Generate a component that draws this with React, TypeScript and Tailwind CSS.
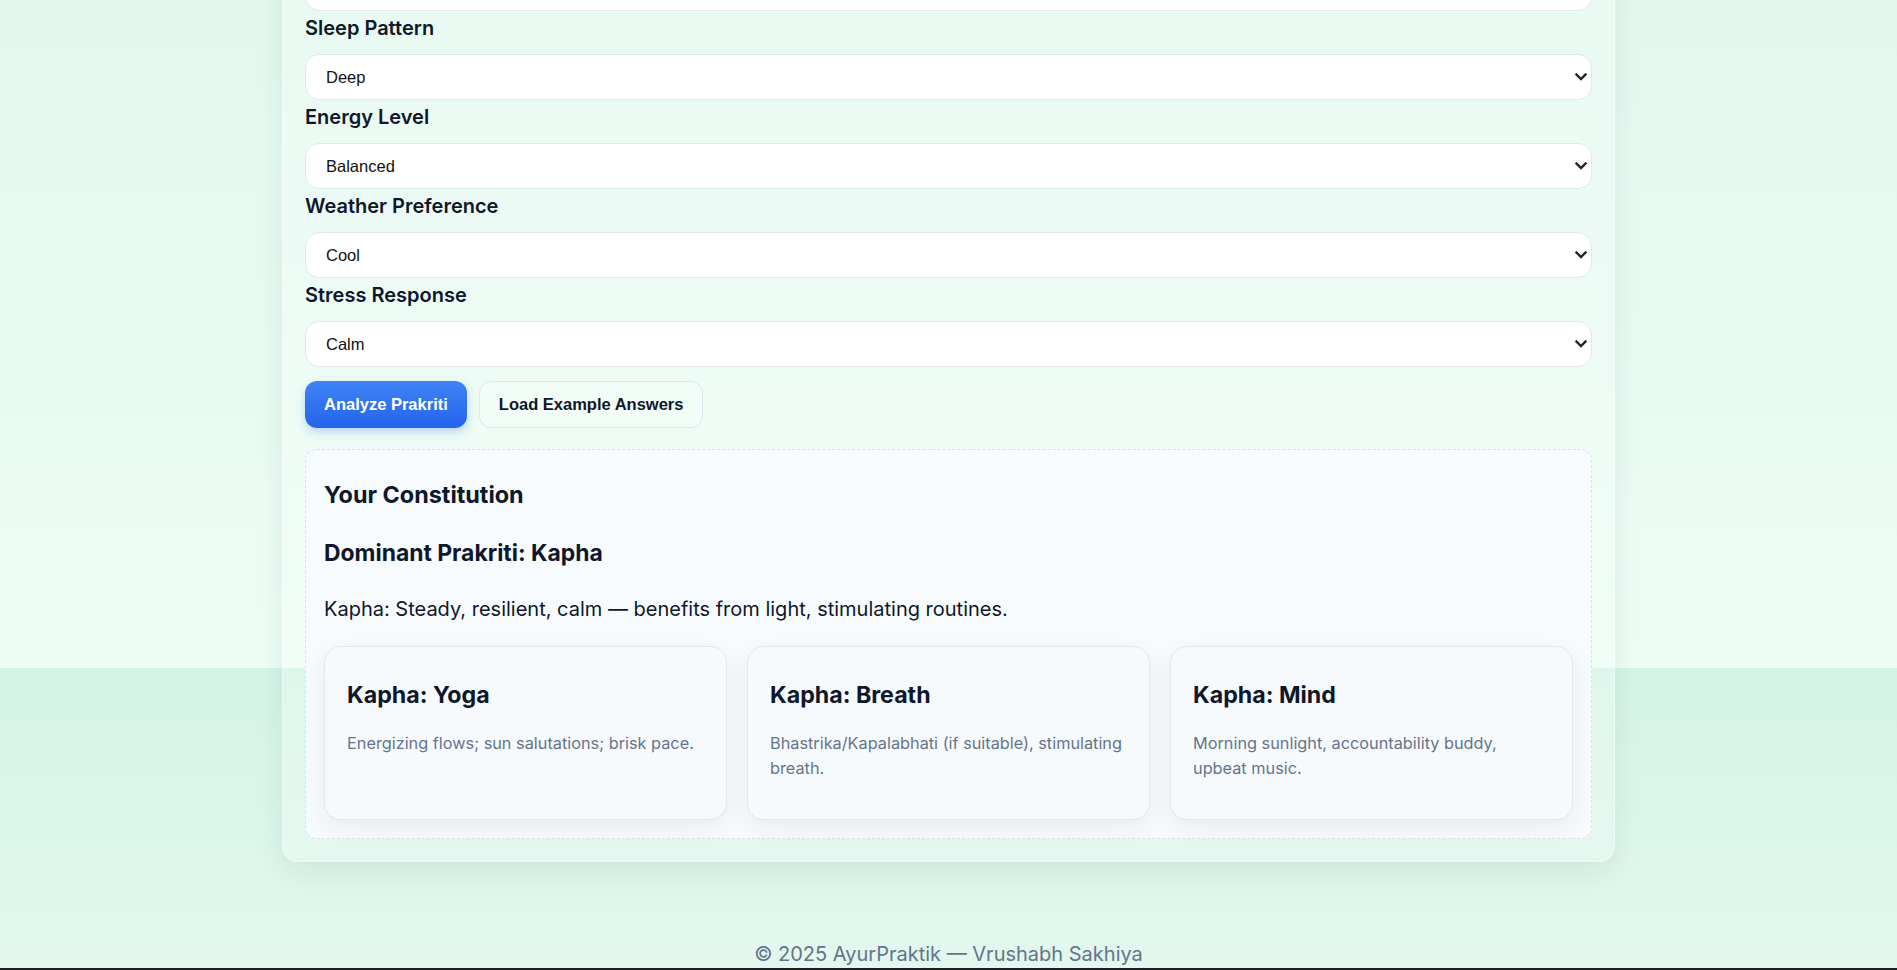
import React from "react";

const fields = [
  { label: "Sleep Pattern", value: "Deep" },
  { label: "Energy Level", value: "Balanced" },
  { label: "Weather Preference", value: "Cool" },
  { label: "Stress Response", value: "Calm" },
];

const cards = [
  { title: "Kapha: Yoga", text: "Energizing flows; sun salutations; brisk pace." },
  { title: "Kapha: Breath", text: "Bhastrika/Kapalabhati (if suitable), stimulating breath." },
  { title: "Kapha: Mind", text: "Morning sunlight, accountability buddy, upbeat music." },
];

function Chevron() {
  return (
    <svg
      className="pointer-events-none absolute right-[5px] top-1/2 -translate-y-1/2"
      width="12"
      height="8"
      viewBox="0 0 12 8"
      fill="none"
    >
      <path d="M1.5 1.5 L6 6 L10.5 1.5" stroke="#1f2430" strokeWidth="2.4" strokeLinecap="square" />
    </svg>
  );
}

function Select({ value }: { value: string }) {
  return (
    <div className="relative">
      <select
        defaultValue={value}
        className="block h-[46px] w-full appearance-none rounded-[14px] border border-[#e2e8f0] bg-white pl-[20px] pr-8 font-['Liberation_Sans',Arial,sans-serif] text-[16.5px] text-[#111] outline-none"
      >
        <option>{value}</option>
      </select>
      <Chevron />
    </div>
  );
}

export default function App() {
  return (
    <div className="flex min-h-screen flex-col overflow-hidden bg-[linear-gradient(180deg,#d3f4e6_0%,#e2f8ee_31%,#ecfdf5_100%)] bg-[length:100%_970px] bg-[position:0px_-302px] bg-repeat font-['Inter',sans-serif]">
      <main className="mx-auto -mt-[60px] w-[1333px] rounded-[16px] border border-white/40 bg-white/25 px-[22px] pb-[22px] pt-[24px] shadow-[0_10px_30px_rgba(15,23,42,0.07)]">
        <Select value="Medium" />
        {fields.map((f) => (
          <div key={f.label}>
            <label className="mb-[12px] mt-[3px] block text-[20px] font-semibold leading-[28px] text-[#0f172a]">
              {f.label}
            </label>
            <Select value={f.value} />
          </div>
        ))}

        <div className="mt-[14px] flex gap-3">
          <button className="h-[47px] rounded-[12px] bg-[linear-gradient(180deg,#3f83f6,#2563eb)] px-[19px] font-['Liberation_Sans',Arial,sans-serif] text-[16.5px] font-bold text-white shadow-[0_4px_10px_rgba(37,99,235,0.25)]">
            Analyze Prakriti
          </button>
          <button className="h-[47px] rounded-[12px] border border-[#dfe7ee] bg-[#f2fdf8] px-[19px] font-['Liberation_Sans',Arial,sans-serif] text-[16.5px] font-bold text-[#0f172a]">
            Load Example Answers
          </button>
        </div>

        <section className="mt-[21px] rounded-[12px] border border-dashed border-[#d9e1e9] bg-[#f8fbfe] px-[18px] pb-[18px] pt-[18px]">
          <h2 className="mt-[12px] text-[23.4px] font-bold leading-[29px] text-[#0f172a]">Your Constitution</h2>
          <h3 className="mt-[30px] text-[22.9px] font-bold leading-[28px] text-[#0f172a]">Dominant Prakriti: Kapha</h3>
          <p className="mt-[28px] text-[20px] leading-[28px] text-[#0f172a]">
            Kapha: Steady, resilient, calm — benefits from light, stimulating routines.
          </p>
          <div className="mt-[23px] grid grid-cols-3 gap-[20px]">
            {cards.map((c) => (
              <div
                key={c.title}
                className="rounded-[17px] border border-[#e3e8ef] bg-[#f7fafd] px-[22px] pb-[22px] pt-[22px] shadow-[0_8px_24px_rgba(15,23,42,0.07)]"
              >
                <h4 className="mt-[12px] text-[23.2px] font-bold leading-[29px] text-[#0f172a]">{c.title}</h4>
                <p className="mb-[16px] mt-[21px] text-[16.3px] leading-[25px] text-[#64748b]">{c.text}</p>
              </div>
            ))}
          </div>
        </section>
      </main>

      <footer className="mt-[79px] text-center text-[20px] leading-[27px] text-[#64748b]">
        © 2025 AyurPraktik — Vrushabh Sakhiya
      </footer>
      <div className="h-[2px] bg-[#1c1f24]" />
    </div>
  );
}
